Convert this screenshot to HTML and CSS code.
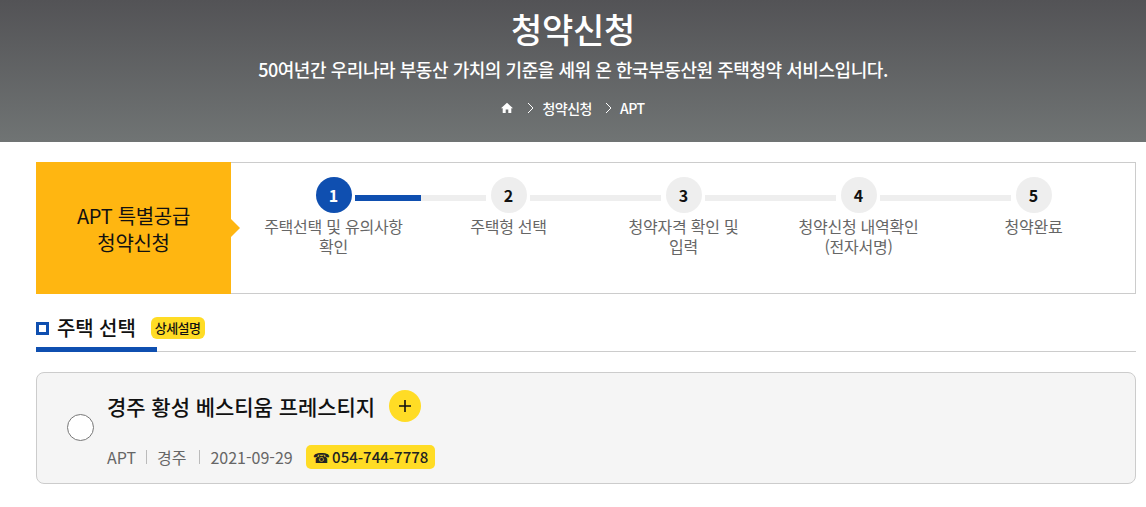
FILE: index.html
```html
<!DOCTYPE html>
<html lang="ko">
<head>
<meta charset="utf-8">
<title>청약신청</title>
<link rel="stylesheet" href="styles.css">
</head>
<body>
<header class="hero">
  <h1 class="hero-title">청약신청</h1>
  <p class="hero-sub">50여년간 우리나라 부동산 가치의 기준을 세워 온 한국부동산원 주택청약 서비스입니다.</p>
  <nav class="crumbs">
    <svg class="home" viewBox="0 0 12 12" width="12" height="12"><path d="M6 .8 0 6.2h1.7V11h3V7.6h2.6V11h3V6.2H12z" fill="#fff"/></svg>
    <svg class="chev" viewBox="0 0 7 12" width="7" height="12"><path d="M1 1l5 5-5 5" fill="none" stroke="#fff" stroke-width="1"/></svg>
    <span class="crumb">청약신청</span>
    <svg class="chev chev-2" viewBox="0 0 7 12" width="7" height="12"><path d="M1 1l5 5-5 5" fill="none" stroke="#fff" stroke-width="1"/></svg>
    <span class="crumb crumb-last">APT</span>
  </nav>
</header>
<main class="page">
  <section class="stepbox">
    <div class="stepbox-label">APT 특별공급<br>청약신청</div>
    <ol class="steps">
      <li class="step step-active"><span class="num">1</span><span class="cap">주택선택 및 유의사항<br>확인</span></li>
      <li class="step"><span class="num">2</span><span class="cap">주택형 선택</span></li>
      <li class="step"><span class="num">3</span><span class="cap">청약자격 확인 및<br>입력</span></li>
      <li class="step"><span class="num">4</span><span class="cap">청약신청 내역확인<br>(전자서명)</span></li>
      <li class="step step-end"><span class="num">5</span><span class="cap">청약완료</span></li>
    </ol>
  </section>
  <div class="sec-head">
    <span class="sec-mark"></span>
    <h2 class="sec-title">주택 선택</h2>
    <span class="sec-badge">상세설명</span>
  </div>
  <article class="card">
    <span class="radio"></span>
    <div class="card-body">
      <div class="card-top">
        <h3 class="card-title">경주 황성 베스티움 프레스티지</h3>
        <span class="plus"><svg viewBox="0 0 12 12" width="12" height="12"><path d="M6 0v12M0 6h12" stroke="#111" stroke-width="1.6"/></svg></span>
      </div>
      <div class="meta">
        <span class="m m-type">APT</span>
        <span class="m m-area">경주</span>
        <span class="m-date">2021-09-29</span>
        <span class="tel"><span class="tel-icon">☎</span>054-744-7778</span>
      </div>
    </div>
  </article>
</main>
</body>
</html>
```
FILE: styles.css
```css
* { box-sizing: border-box; }
html, body { margin: 0; padding: 0; }
body {
  background: #fff;
  font-family: "Noto Sans CJK KR", "Noto Sans", sans-serif;
  color: #111;
  overflow: hidden;
}
.hero {
  height: 142px;
  background: linear-gradient(#535356, #707474);
  color: #fff;
  text-align: center;
  padding-top: 8px;
}
.hero-title { margin: 0; font-size: 34px; line-height: 42px; font-weight: 500; letter-spacing: -.3px; }
.hero-sub { margin: 5px 0 0; font-size: 18px; line-height: 28px; font-weight: 500; letter-spacing: -.45px; }
.crumbs {
  display: flex;
  justify-content: center;
  align-items: center;
  height: 20px;
  margin-top: 15px;
  font-size: 14px;
  font-weight: 500;
  letter-spacing: -.5px;
}
.home { margin-right: 14px; }
.chev { margin-right: 8px; }
.chev-2 { margin-left: 13px; }
.page { padding: 20px 10px 0 36px; }
.stepbox {
  display: flex;
  height: 132px;
  border: 1px solid #ccc;
  border-left: 0;
}
.stepbox-label {
  position: relative;
  flex: 0 0 195px;
  margin: -1px 0;
  background: #ffb611;
  font-size: 20px;
  line-height: 27px;
  text-align: center;
  padding-top: 40px;
  letter-spacing: -.3px;
}
.stepbox-label::after {
  content: "";
  position: absolute;
  left: 195px;
  top: 57px;
  border-left: 9px solid #ffb611;
  border-top: 9px solid transparent;
  border-bottom: 9px solid transparent;
}
.steps {
  display: flex;
  list-style: none;
  margin: 0 0 0 15px;
  padding: 14px 0 0;
}
.step {
  position: relative;
  width: 175px;
  display: flex;
  flex-direction: column;
  align-items: center;
}
.step::after {
  content: "";
  position: absolute;
  left: 109px;
  top: 18px;
  width: 131px;
  height: 6px;
  background: #eee;
}
.step-active::after { background: linear-gradient(to right, #0f4fb0 66px, #eee 66px); }
.step-end::after { display: none; }
.num {
  width: 36px;
  height: 36px;
  border-radius: 50%;
  background: #eee;
  font-size: 16px;
  font-weight: 700;
  line-height: 36px;
  text-align: center;
}
.step-active .num { background: #0f4fb0; color: #fff; }
.cap {
  font-size: 16px;
  line-height: 20px;
  color: #666;
  text-align: center;
  letter-spacing: -.25px;
  margin-top: 3px;
  white-space: nowrap;
}
.sec-head {
  display: flex;
  align-items: center;
  height: 58px;
  padding-top: 11px;
  border-bottom: 1px solid #ccc;
  position: relative;
}
.sec-head::after {
  content: "";
  position: absolute;
  left: 0;
  bottom: -1px;
  width: 121px;
  height: 5px;
  background: #0f4fb0;
}
.sec-mark {
  width: 13px;
  height: 13px;
  border: 3px solid #0f4fb0;
  margin-right: 8px;
}
.sec-title { margin: 0 15px 0 0; font-size: 20px; font-weight: 500; line-height: 28px; letter-spacing: -.1px; }
.sec-badge {
  height: 22px;
  padding: 0 4px;
  background: #ffdc25;
  border-radius: 6px;
  font-size: 13px;
  font-weight: 500;
  line-height: 21px;
  letter-spacing: -.5px;
}
.card {
  display: flex;
  align-items: flex-start;
  height: 112px;
  margin-top: 20px;
  background: #f5f5f5;
  border: 1px solid #ccc;
  border-radius: 8px;
  padding: 0 0 0 30px;
}
.radio {
  width: 27px;
  height: 27px;
  margin-top: 41px;
  flex: none;
  border: 1px solid #777;
  border-radius: 50%;
  background: #fff;
}
.card-body { margin-left: 13px; }
.card-top { display: flex; align-items: flex-start; height: 72px; }
.card-title { margin: 18px 14px 0 0; font-size: 21px; line-height: 30px; font-weight: 500; letter-spacing: -.05px; }
.plus {
  width: 32px;
  height: 32px;
  margin-top: 17px;
  border-radius: 50%;
  background: #ffdc25;
  display: flex;
  align-items: center;
  justify-content: center;
}
.meta { display: flex; align-items: center; height: 24px; font-size: 16px; color: #666; }
.m { position: relative; }
.m-type { margin-right: 21px; }
.m-area { margin-right: 24px; }
.m::after {
  content: "";
  position: absolute;
  top: 5px;
  right: -11px;
  width: 1px;
  height: 14px;
  background: #bbb;
}
.m-area::after { right: -14px; }
.m-date { margin-right: 13px; }
.tel {
  height: 24px;
  padding: 0 7px;
  background: #ffdc25;
  border-radius: 5px;
  color: #222;
  font-size: 15px;
  font-weight: 500;
  line-height: 24px;
}
.tel-icon { font-family: "DejaVu Sans", sans-serif; font-size: 14px; margin-right: 2px; }
```
